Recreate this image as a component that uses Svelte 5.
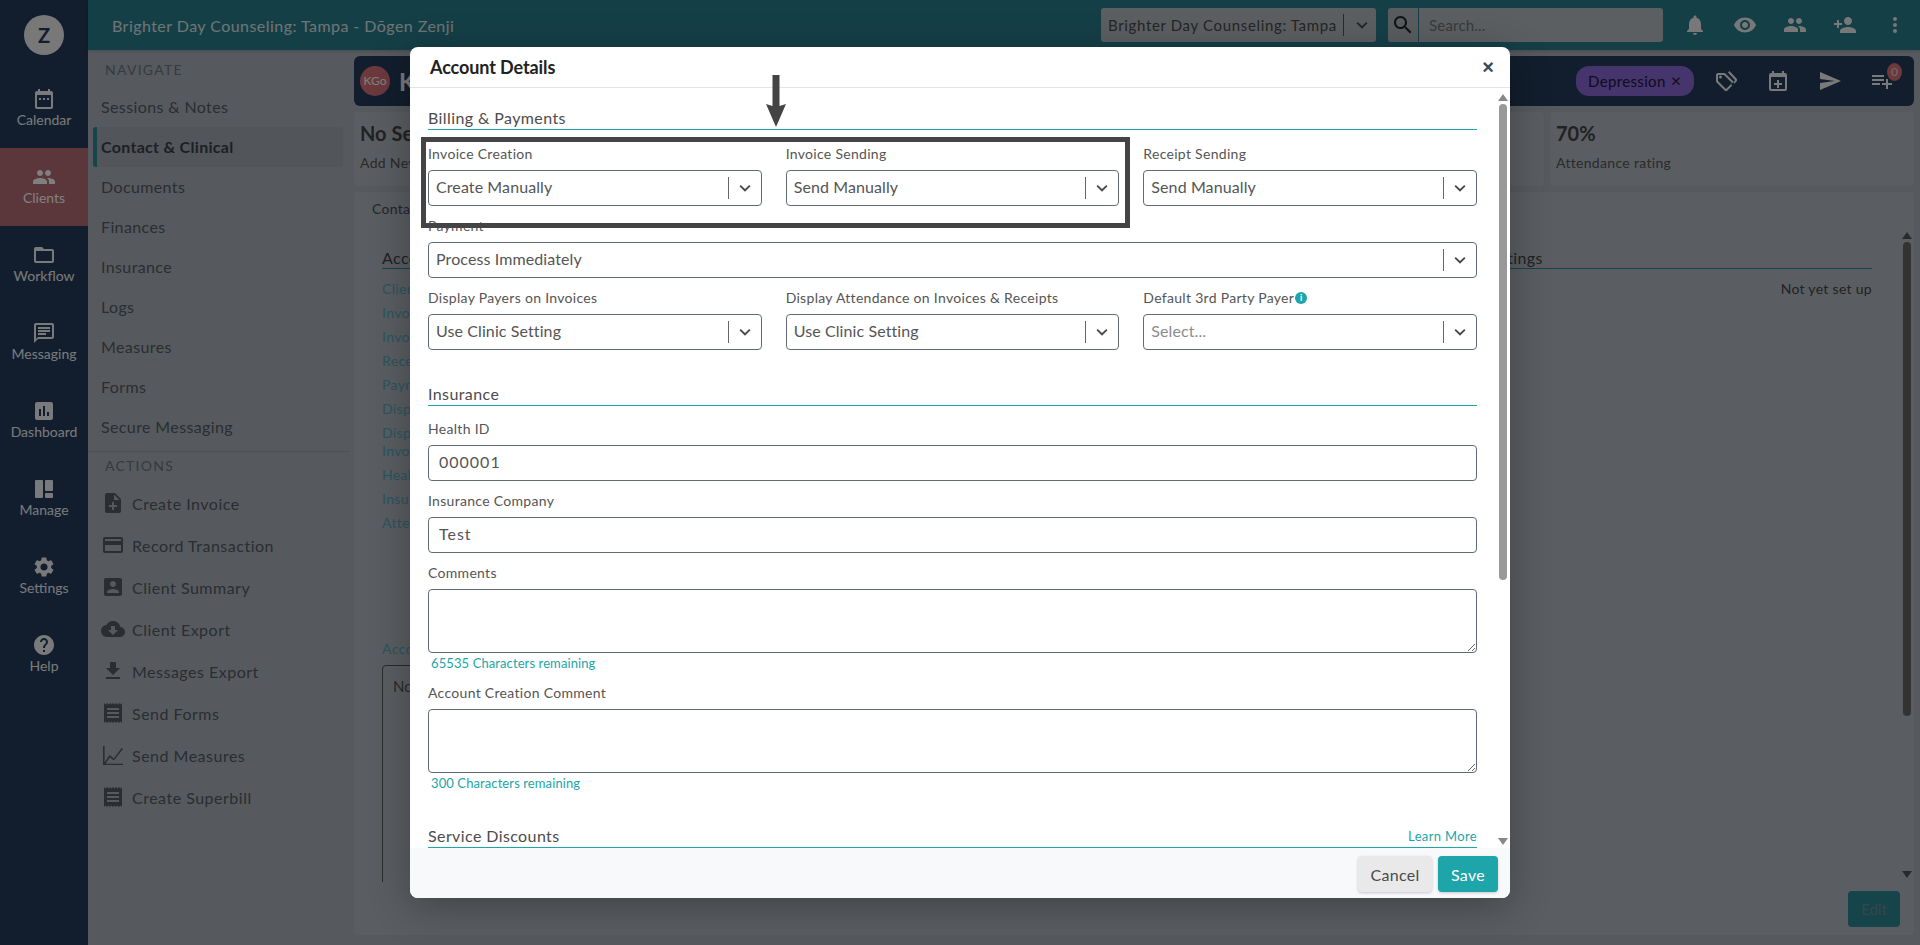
<script>
  const icons = {
    calendar: 'M19 4h-1V2h-2v2H8V2H6v2H5a2 2 0 0 0-2 2v14a2 2 0 0 0 2 2h14a2 2 0 0 0 2-2V6a2 2 0 0 0-2-2zm0 16H5V8h14v12zM7 11h2v2H7zm4 0h2v2h-2zm4 0h2v2h-2z',
    people: 'M16 11c1.66 0 2.99-1.34 2.99-3S17.66 5 16 5c-1.66 0-3 1.34-3 3s1.34 3 3 3zm-8 0c1.66 0 2.99-1.34 2.99-3S9.66 5 8 5C6.34 5 5 6.34 5 8s1.34 3 3 3zm0 2c-2.33 0-7 1.17-7 3.5V19h14v-2.5c0-2.33-4.67-3.5-7-3.5zm8 0c-.29 0-.62.02-.97.05 1.16.84 1.97 1.97 1.97 3.45V19h6v-2.5c0-2.33-4.67-3.5-7-3.5z',
    folder: 'M20 6h-8l-2-2H4c-1.1 0-1.99.9-1.99 2L2 18c0 1.1.9 2 2 2h16c1.1 0 2-.9 2-2V8c0-1.1-.9-2-2-2zm0 12H4V8h16v10z',
    message: 'M20 2H4c-1.1 0-2 .9-2 2v18l4-4h14c1.1 0 2-.9 2-2V4c0-1.1-.9-2-2-2zm0 14H6l-2 2V4h16v12zM6 12h8v2H6zm0-3h12v2H6zm0-3h12v2H6z',
    chart: 'M19 3H5c-1.1 0-2 .9-2 2v14c0 1.1.9 2 2 2h14c1.1 0 2-.9 2-2V5c0-1.1-.9-2-2-2zM9 17H7v-7h2v7zm4 0h-2V7h2v10zm4 0h-2v-4h2v4z',
    manage: 'M4 3h6a1 1 0 0 1 1 1v16a1 1 0 0 1-1 1H4a1 1 0 0 1-1-1V4a1 1 0 0 1 1-1zm10 0h6a1 1 0 0 1 1 1v9a1 1 0 0 1-1 1h-6a1 1 0 0 1-1-1V4a1 1 0 0 1 1-1zm0 13h6a1 1 0 0 1 1 1v3a1 1 0 0 1-1 1h-6a1 1 0 0 1-1-1v-3a1 1 0 0 1 1-1z',
    settings: 'M19.14 12.94c.04-.3.06-.61.06-.94 0-.32-.02-.64-.07-.94l2.03-1.58c.18-.14.23-.41.12-.61l-1.92-3.32c-.12-.22-.37-.29-.59-.22l-2.39.96c-.5-.38-1.03-.7-1.62-.94l-.36-2.54c-.04-.24-.24-.41-.48-.41h-3.84c-.24 0-.43.17-.47.41l-.36 2.54c-.59.24-1.13.57-1.62.94l-2.39-.96c-.22-.08-.47 0-.59.22L2.74 8.87c-.12.21-.08.47.12.61l2.03 1.58c-.05.3-.09.63-.09.94s.02.64.07.94l-2.03 1.58c-.18.14-.23.41-.12.61l1.92 3.32c.12.22.37.29.59.22l2.39-.96c.5.38 1.03.7 1.62.94l.36 2.54c.05.24.24.41.48.41h3.84c.24 0 .44-.17.47-.41l.36-2.54c.59-.24 1.13-.56 1.62-.94l2.39.96c.22.08.47 0 .59-.22l1.92-3.32c.12-.22.07-.47-.12-.61l-2.01-1.58zM12 15.6c-1.98 0-3.6-1.62-3.6-3.6s1.62-3.6 3.6-3.6 3.6 1.62 3.6 3.6-1.62 3.6-3.6 3.6z',
    help: 'M12 2C6.48 2 2 6.48 2 12s4.48 10 10 10 10-4.48 10-10S17.52 2 12 2zm1 17h-2v-2h2v2zm2.07-7.75l-.9.92C13.45 12.9 13 13.5 13 15h-2v-.5c0-1.1.45-2.1 1.17-2.83l1.24-1.26c.37-.36.59-.86.59-1.41 0-1.1-.9-2-2-2s-2 .9-2 2H8c0-2.21 1.79-4 4-4s4 1.79 4 4c0 .88-.36 1.68-.93 2.25z',
    noteadd: 'M14 2H6c-1.1 0-1.99.9-1.99 2L4 20c0 1.1.89 2 1.99 2H18c1.1 0 2-.9 2-2V8l-6-6zm2 14h-3v3h-2v-3H8v-2h3v-3h2v3h3v2zm-3-7V3.5L18.5 9H13z',
    card: 'M20 4H4c-1.11 0-1.99.89-1.99 2L2 18c0 1.11.89 2 2 2h16c1.11 0 2-.89 2-2V6c0-1.11-.89-2-2-2zm0 14H4v-6h16v6zm0-10H4V6h16v2z',
    accountbox: 'M3 5v14c0 1.1.89 2 2 2h14c1.1 0 2-.9 2-2V5c0-1.1-.9-2-2-2H5c-1.11 0-2 .9-2 2zm12 4c0 1.66-1.34 3-3 3s-3-1.34-3-3 1.34-3 3-3 3 1.34 3 3zm-9 8c0-2 4-3.1 6-3.1s6 1.1 6 3.1v1H6v-1z',
    cloud: 'M19.35 10.04C18.67 6.59 15.64 4 12 4 9.11 4 6.6 5.64 5.35 8.04 2.34 8.36 0 10.91 0 14c0 3.31 2.69 6 6 6h13c2.76 0 5-2.24 5-5 0-2.64-2.05-4.78-4.65-4.96zM17 13l-5 5-5-5h3V9h4v4h3z',
    getapp: 'M19 9h-4V3H9v6H5l7 7 7-7zM5 18v2h14v-2H5z',
    receipt: 'M18 17H6v-2h12v2zm0-4H6v-2h12v2zm0-4H6V7h12v2zM3 22l1.5-1.5L6 22l1.5-1.5L9 22l1.5-1.5L12 22l1.5-1.5L15 22l1.5-1.5L18 22l1.5-1.5L21 22V2l-1.5 1.5L18 2l-1.5 1.5L15 2l-1.5 1.5L12 2l-1.5 1.5L9 2 7.5 3.5 6 2 4.5 3.5 3 2v20z',
    measure: 'M2 3h1.6v16.4l5-7.4 4.2 3.4L20.6 5l1.3 1-9 11.6-4-3.2-4.3 6.4H22V22H2z',
    bell: 'M12 22c1.1 0 2-.9 2-2h-4c0 1.1.89 2 2 2zm6-6v-5c0-3.07-1.64-5.64-4.5-6.32V4c0-.83-.67-1.5-1.5-1.5s-1.5.67-1.5 1.5v.68C7.63 5.36 6 7.92 6 11v5l-2 2v1h16v-1l-2-2z',
    eye: 'M12 4.5C7 4.5 2.73 7.61 1 12c1.73 4.39 6 7.5 11 7.5s9.27-3.11 11-7.5c-1.73-4.39-6-7.5-11-7.5zM12 17c-2.76 0-5-2.24-5-5s2.24-5 5-5 5 2.24 5 5-2.24 5-5 5zm0-8c-1.66 0-3 1.34-3 3s1.34 3 3 3 3-1.34 3-3-1.34-3-3-3z',
    personadd: 'M15 12c2.21 0 4-1.79 4-4s-1.79-4-4-4-4 1.79-4 4 1.79 4 4 4zm-9-2V7H4v3H1v2h3v3h2v-3h3v-2H6zm9 4c-2.67 0-8 1.34-8 4v2h16v-2c0-2.66-5.33-4-8-4z',
    dots: 'M12 8a2 2 0 1 0 0-4 2 2 0 0 0 0 4zm0 2a2 2 0 1 0 0 4 2 2 0 0 0 0-4zm0 6a2 2 0 1 0 0 4 2 2 0 0 0 0-4z',
    tag: 'M19.4 12.6l-8-8.1A2 2 0 0 0 10 4H4a2 2 0 0 0-2 2v6c0 .55.22 1.05.6 1.4l8 8.1a2 2 0 0 0 2.8 0l6-6a2 2 0 0 0 0-2.9zM12 20l-8-8V6h6l8 8-6 6zM6.5 9.5a1.5 1.5 0 1 0 0-3 1.5 1.5 0 0 0 0 3zM14 3.5l1.4-1.4 7.1 7.4c.8.8.8 2 0 2.9l-4.3 4.4-1.2-1.2 4.1-4.4z',
    eventadd: 'M19 4h-1V2h-2v2H8V2H6v2H5a2 2 0 0 0-2 2v14a2 2 0 0 0 2 2h14a2 2 0 0 0 2-2V6a2 2 0 0 0-2-2zm0 16H5V8h14v12zm-8-9h2v3h3v2h-3v3h-2v-3H8v-2h3z',
    send: 'M2.01 21L23 12 2.01 3 2 10l15 2-15 2z',
    playlist: 'M14 10H2v2h12v-2zm0-4H2v2h12V6zm4 8v-4h-2v4h-4v2h4v4h2v-4h4v-2h-4zM2 16h8v-2H2v2z',
    search: 'M15.5 14h-.79l-.28-.27C15.41 12.59 16 11.11 16 9.5 16 5.91 13.09 3 9.5 3S3 5.91 3 9.5 5.91 16 9.5 16c1.61 0 3.09-.59 4.23-1.57l.27.28v.79l5 4.99L20.49 19l-4.99-5zm-6 0C7.01 14 5 11.99 5 9.5S7.01 5 9.5 5 14 7.01 14 9.5 11.99 14 9.5 14z',
    chevron: 'M7.4 8.6L12 13.2l4.6-4.6L18 10l-6 6-6-6z'
  };
  const rail = [
    ['calendar', 'Calendar'], ['people', 'Clients'], ['folder', 'Workflow'], ['message', 'Messaging'],
    ['chart', 'Dashboard'], ['manage', 'Manage'], ['settings', 'Settings'], ['help', 'Help']
  ];
  const nav = ['Sessions & Notes', 'Contact & Clinical', 'Documents', 'Finances', 'Insurance', 'Logs', 'Measures', 'Forms', 'Secure Messaging'];
  const actions = [
    ['noteadd', 'Create Invoice'], ['card', 'Record Transaction'], ['accountbox', 'Client Summary'], ['cloud', 'Client Export'],
    ['getapp', 'Messages Export'], ['receipt', 'Send Forms'], ['measure', 'Send Measures'], ['receipt', 'Create Superbill']
  ];
  const detailLinks = ['Client Status', 'Invoice Creation', 'Invoice Sending', 'Receipt Sending', 'Payment', 'Display Payers on Invoices', 'Display Attendance on Invoices & Receipts', 'Health ID', 'Insurance Company', 'Attendance'];
</script>

{#snippet icon(name)}
  <svg class="ico" viewBox="0 0 24 24" aria-hidden="true"><path d={icons[name]} /></svg>
{/snippet}

{#snippet select(value, placeholder = false)}
  <div class="select">
    <span class="value" class:placeholder>{value}</span>
    <span class="sep"></span>
    <span class="chev">{@render icon('chevron')}</span>
  </div>
{/snippet}

<div class="page">
  <aside class="rail">
    <div class="logo">Z</div>
    {#each rail as [ic, label]}
      <div class="rail-item" class:current={label === 'Clients'}>
        {@render icon(ic)}
        <span>{label}</span>
      </div>
    {/each}
  </aside>

  <div class="main">
    <header class="topbar">
      <div class="top-title">Brighter Day Counseling: Tampa - Dōgen Zenji</div>
      <div class="top-select">
        <span>Brighter Day Counseling: Tampa</span>
        <i></i>
        {@render icon('chevron')}
      </div>
      <div class="top-search">
        <span class="sbtn">{@render icon('search')}</span>
        <span class="sinput">Search...</span>
      </div>
      <div class="top-icons">
        {@render icon('bell')}
        {@render icon('eye')}
        {@render icon('people')}
        {@render icon('personadd')}
        {@render icon('dots')}
      </div>
    </header>

    <div class="below">
      <nav class="side">
        <div class="side-title">NAVIGATE</div>
        {#each nav as n}
          <div class="side-row" class:active={n === 'Contact & Clinical'}>{n}</div>
        {/each}
        <div class="side-sep"></div>
        <div class="side-title act">ACTIONS</div>
        {#each actions as [ic, label]}
          <div class="act-row"><span class="act-ic">{@render icon(ic)}</span>{label}</div>
        {/each}
      </nav>

      <section class="content">
        <div class="client-bar">
          <div class="kgo">KGo</div>
          <div class="client-name">KGo Test</div>
          <div class="chip">Depression <b>×</b></div>
          <div class="client-icons">
            {@render icon('tag')}
            {@render icon('eventadd')}
            {@render icon('send')}
            <span class="pl">{@render icon('playlist')}<em>0</em></span>
          </div>
        </div>

        <div class="stats">
          <div class="stat grow"><strong>No Sessions</strong><span>Add New</span></div>
          <div class="stat last"><strong>70%</strong><span>Attendance rating</span></div>
        </div>

        <div class="card">
          <div class="tab">Contact</div>
          <div class="scroll">
            <div class="cols">
              <div class="col-left">
                <div class="head">Account</div>
                <div class="links">
                  {#each detailLinks as l}<div>{l}</div>{/each}
                </div>
                <div class="acc">Account Creation Comment</div>
                <div class="notes">No comment</div>
              </div>
              <div class="col-right">
                <div class="head">Client Settings</div>
                <div class="notset">Not yet set up</div>
              </div>
            </div>
          </div>
          <div class="sb outer">
            <span class="up"></span><span class="thumb"></span><span class="down"></span>
          </div>
          <div class="card-foot"><button class="edit">Edit</button></div>
        </div>
      </section>
    </div>
  </div>

  <div class="backdrop"></div>

  <div class="modal">
    <div class="m-head">
      <h2>Account Details</h2>
      <span class="close">×</span>
    </div>
    <div class="m-body">
      <div class="m-scroll">
        <div class="sec">Billing &amp; Payments</div>
        <div class="grid">
          <div class="f"><label>Invoice Creation</label>{@render select('Create Manually')}</div>
          <div class="f"><label>Invoice Sending</label>{@render select('Send Manually')}</div>
          <div class="f"><label>Receipt Sending</label>{@render select('Send Manually')}</div>
          <div class="f full"><label>Payment</label>{@render select('Process Immediately')}</div>
          <div class="f"><label>Display Payers on Invoices</label>{@render select('Use Clinic Setting')}</div>
          <div class="f"><label>Display Attendance on Invoices &amp; Receipts</label>{@render select('Use Clinic Setting')}</div>
          <div class="f"><label>Default 3rd Party Payer<span class="info">i</span></label>{@render select('Select...', true)}</div>
        </div>

        <div class="sec second">Insurance</div>
        <div class="f first"><label>Health ID</label><input value="000001" /></div>
        <div class="f gap"><label>Insurance Company</label><input value="Test" /></div>
        <div class="f gap"><label>Comments</label><textarea></textarea></div>
        <div class="remain">65535 Characters remaining</div>
        <div class="f gap2"><label>Account Creation Comment</label><textarea></textarea></div>
        <div class="remain">300 Characters remaining</div>
        <div class="sec third"><span>Service Discounts</span><a href="#top">Learn More</a></div>
      </div>
      <div class="sb inner">
        <span class="up"></span><span class="thumb"></span><span class="down"></span>
      </div>
    </div>
    <div class="m-foot">
      <button class="cancel">Cancel</button>
      <button class="save">Save</button>
    </div>
  </div>

  <div class="mark-box"></div>
  <svg class="mark-arrow" viewBox="0 0 20 52" aria-hidden="true"><path d="M6.5 0h7v31l6.5-2-10 23L0 29l6.5 2z" /></svg>
</div>

<style>
  :global(body) { margin: 0; background: #acb4bc; }
  .page {
    display: flex; width: 1920px; height: 945px; overflow: hidden; position: relative;
    font-family: Lato, "Liberation Sans", sans-serif; color: #555;
  }
  .ico { display: block; width: 24px; height: 24px; fill: currentColor; flex: none; }

  .rail { width: 88px; flex: none; background: #243c5a; color: #f2f4f6; display: flex; flex-direction: column; }
  .logo {
    width: 40px; height: 40px; border-radius: 50%; background: #f0f1f3; color: #243c5a; margin: 15px auto; font: 700 20px/40px Lato, sans-serif; text-align: center;
  }
  .rail-item { height: 78px; box-sizing: border-box; padding-top: 17px; display: flex; flex-direction: column; align-items: center; font-size: 14px; line-height: 18px; }
  .rail-item.current { background: #b66e78; color: #fff; }

  .main { flex: 1; display: flex; flex-direction: column; min-width: 0; }
  .topbar { height: 50px; flex: none; background: #2a7e8e; display: flex; align-items: center; box-shadow: 0 1px 3px rgba(0,0,0,.2); }
  .top-title { margin-left: 24px; font-size: 16px; color: #dfe9ea; letter-spacing: .45px; flex: 1; }
  .top-select {
    width: 275px; height: 34px; box-sizing: border-box; background: #b8bec2; border-radius: 3px; color: #4a4a4a; display: flex; align-items: center;
    padding-left: 7px; font-size: 15px; letter-spacing: .65px; margin-right: 12px; white-space: nowrap;
  }
  .top-select i { width: 1px; height: 22px; background: #555; margin: 0 7px 0 auto; }
  .top-select .ico { width: 22px; height: 22px; margin-right: 3px; }
  .top-search { display: flex; height: 34px; width: 275px; }
  .sbtn { width: 30px; background: #b4babe; color: #222; border-radius: 3px 0 0 3px; display: flex; align-items: center; justify-content: center; }
  .sinput { flex: 1; margin-left: 1px; background: #b8bec2; color: #707478; font-size: 15px; line-height: 34px; padding-left: 10px; border-radius: 0 3px 3px 0; letter-spacing: .2px; }
  .top-icons { display: flex; color: #f0f0f0; gap: 26px; margin: 0 13px 0 20px; }

  .below { flex: 1; display: flex; min-height: 0; }
  .side { width: 262px; flex: none; padding-top: 10px; box-sizing: border-box; color: #545b63; font-size: 16px; }
  .side-title { height: 20px; line-height: 20px; padding-left: 17px; font-size: 14px; letter-spacing: 1.25px; color: #6e757d; margin-bottom: 7px; }
  .side-title.act { margin-bottom: 6px; }
  .side-row { height: 40px; line-height: 40px; padding-left: 13px; letter-spacing: .38px; }
  .side-row.active { font-weight: 700; color: #3a4149; margin: 0 7px 0 5px; padding-left: 4px; background: #a5acb4; border-left: 4px solid #2a8896; border-radius: 3px; letter-spacing: .3px; }
  .side-sep { height: 1px; background: #9aa1a9; margin: 4px 0 4px; }
  .act-row { height: 42px; display: flex; align-items: center; letter-spacing: .5px; padding-left: 13px; }
  .act-ic { width: 24px; margin-right: 7px; display: block; }

  .content { flex: 1; min-width: 0; padding: 6px 6px 10px 4px; display: flex; flex-direction: column; gap: 6px; }
  .client-bar { height: 50px; flex: none; background: #243c5a; border-radius: 6px; color: #f4f4f4; display: flex; align-items: center; padding-left: 6px; }
  .kgo { width: 30px; height: 30px; border-radius: 50%; background: #d9737a; color: #fff; font-size: 12px; line-height: 30px; text-align: center; margin-right: 9px; }
  .client-name { font-size: 24px; font-weight: 700; flex: 1; }
  .chip { width: 118px; height: 30px; box-sizing: border-box; border-radius: 13px; background: #8a6ad9; color: #201640; font-size: 15px; line-height: 30px; padding-left: 12px; letter-spacing: .35px; white-space: nowrap; }
  .chip b { font-weight: 400; font-size: 18px; line-height: 18px; margin-left: 1px; }
  .client-icons { display: flex; align-items: center; gap: 28px; margin: 0 20px 0 20px; }
  .pl { display: block; position: relative; }
  .pl em { position: absolute; right: -8px; top: -6px; width: 15px; height: 18px; border-radius: 50%; background: #d9737a; color: #f4cfd2; font: 400 12px/18px Lato, sans-serif; text-align: center; }

  .stats { display: flex; gap: 6px; height: 74px; flex: none; }
  .stat { background: #b4bcc4; border-radius: 4px; padding: 9px 6px; box-sizing: border-box; display: flex; flex-direction: column; gap: 9px; color: #555; font-size: 14px; letter-spacing: .32px; }
  .stat strong { font-size: 20px; line-height: 24px; color: #444; letter-spacing: 0; }
  .stat.grow { flex: 1; }
  .stat.last { width: 364px; flex: none; }

  .card { flex: 1; min-height: 0; background: #b4bcc4; border-radius: 4px; position: relative; display: flex; flex-direction: column; }
  .tab { height: 34px; flex: none; box-sizing: border-box; padding: 8px 0 0 18px; font-size: 14px; line-height: 18px; color: #4c4c4c; letter-spacing: .3px; }
  .scroll { flex: 1; min-height: 0; overflow: hidden; padding: 22px 42px 0 28px; }
  .cols { display: flex; }
  .col-left { width: 800px; flex: none; }
  .col-right { flex: 1; padding-left: 253px; }
  .head { font-size: 16px; line-height: 19px; padding-bottom: 1px; border-bottom: 1px solid #2a8896; color: #444; letter-spacing: .4px; }
  .col-left .head { margin-right: 40px; }
  .links { width: 190px; margin-top: 11px; display: flex; flex-direction: column; gap: 6px; color: #56aabf; font-size: 14px; line-height: 18px; letter-spacing: .35px; }
  .acc { color: #56aabf; font-size: 14px; line-height: 18px; letter-spacing: .35px; margin-top: 108px; white-space: nowrap; }
  .notes { margin-top: 7px; height: 300px; border: 1px solid #555; border-radius: 4px; padding: 11px 10px; font-size: 15px; color: #555; box-sizing: border-box; }
  .notset { text-align: right; margin-top: 11px; font-size: 14px; line-height: 18px; color: #444; letter-spacing: .3px; }
  .card-foot { height: 53px; flex: none; display: flex; justify-content: flex-end; padding: 9px 14px 0 0; box-sizing: border-box; }
  .edit { width: 52px; height: 36px; border: 0; border-radius: 4px; background: #2a8896; color: #6f8e94; font: 15px Lato, sans-serif; }

  .sb { position: absolute; display: flex; flex-direction: column; align-items: center; }
  .sb .up { width: 0; height: 0; border: 5px solid transparent; border-top: 0; border-bottom: 7px solid #555; flex: none; }
  .sb .down { width: 0; height: 0; border: 5px solid transparent; border-bottom: 0; border-top: 7px solid #555; flex: none; margin-top: auto; }
  .sb .thumb { width: 8px; margin-top: 3px; border-radius: 4px; background: #666; flex: none; }
  .sb.outer { right: 2px; top: 40px; bottom: 57px; width: 10px; }
  .sb.outer .thumb { height: 474px; }

  .backdrop { position: absolute; inset: 0; background: rgba(0,0,0,.5); }

  .modal {
    position: absolute; left: 410px; top: 47px; width: 1100px; height: 851px; background: #fff; border-radius: 8px; display: flex; flex-direction: column;
    box-shadow: 0 8px 40px rgba(0,0,0,.3); color: #555;
  }
  .m-head { height: 40px; flex: none; display: flex; align-items: center; border-bottom: 1px solid #e4e4e4; padding: 0 20px; justify-content: space-between; }
  .m-head h2 { margin: 0; font-size: 18px; font-weight: 700; color: #222; letter-spacing: -.1px; }
  .close { font-size: 20px; color: #3a4a5a; margin-right: -4px; font-family: "Liberation Sans", sans-serif; font-weight: 700; }

  .m-body { flex: 1; min-height: 0; position: relative; overflow: hidden; }
  .m-scroll { padding: 21px 33px 0 18px; }
  .sec { font-size: 16px; line-height: 18px; padding-bottom: 2px; border-bottom: 1px solid #1da5a9; color: #4c4c4c; letter-spacing: .4px; display: flex; justify-content: space-between; align-items: flex-end; }
  .sec a { font-size: 13px; color: #1da5a9; text-decoration: none; letter-spacing: .35px; }
  .sec.second { margin-top: 35px; }
  .sec.third { margin-top: 36px; }
  .grid { display: grid; grid-template-columns: repeat(3, 1fr); column-gap: 24px; row-gap: 12px; margin-top: 16px; }
  .f.full { grid-column: 1 / -1; }
  .f.first { margin-top: 15px; }
  .f.gap { margin-top: 12px; }
  .f.gap2 { margin-top: 14px; }
  .f label { display: flex; align-items: flex-start; height: 20px; margin-bottom: 4px; font-size: 14px; line-height: 16px; color: #555; letter-spacing: .3px; white-space: nowrap; }
  .info { width: 12px; height: 12px; border-radius: 50%; background: #1da5a9; color: #fff; font: 700 9px/12px Lato, sans-serif; text-align: center; margin: 2px 0 0 1px; }
  .select { height: 36px; box-sizing: border-box; border: 1px solid #616a75; border-radius: 4px; display: flex; align-items: center; padding-left: 7px; font-size: 16px; color: #555; letter-spacing: .1px; background: #fff; }
  .value { flex: 1; padding-bottom: 4px; }
  .value.placeholder { color: #8c8c8c; }
  .sep { width: 1px; height: 22px; background: #666; }
  .chev { width: 32px; display: flex; justify-content: center; color: #4a4a4a; }
  .chev .ico { width: 22px; height: 22px; }
  input, textarea { display: block; width: 100%; box-sizing: border-box; border: 1px solid #616a75; border-radius: 4px; font: 16px Lato, sans-serif; color: #555; letter-spacing: 1px; padding: 0 10px; outline: 0; background: #fff; }
  input { height: 36px; padding-bottom: 4px; }
  textarea { height: 64px; resize: vertical; }
  .remain { margin-top: 2px; padding-left: 3px; font-size: 13px; line-height: 16px; color: #1da5a9; letter-spacing: .1px; }

  .sb.inner { right: 2px; top: 6px; bottom: 3px; width: 10px; }
  .sb.inner .up, .sb.inner .down { border-bottom-color: #888; border-top-color: #888; }
  .sb.inner .thumb { height: 476px; background: #999; }

  .m-foot { height: 50px; flex: none; background: #f8f9fb; border-radius: 0 0 8px 8px; display: flex; justify-content: flex-end; gap: 6px; padding: 8px 12px 0 0; box-sizing: border-box; position: relative; }
  .m-foot button { height: 36px; border: 0; border-radius: 4px; font: 16px Lato, sans-serif; letter-spacing: .3px; box-shadow: 0 1px 3px rgba(0,0,0,.2); }
  .cancel { width: 74px; background: #e9e9e9; color: #4a4a4a; }
  .save { width: 60px; background: #1da5a9; color: #fff; font-weight: 700; }

  .mark-box { position: absolute; left: 421px; top: 137px; width: 709px; height: 91px; box-sizing: border-box; border: 5px solid #444; }
  .mark-arrow { position: absolute; left: 766px; top: 75px; width: 20px; height: 52px; fill: #444; }
</style>
